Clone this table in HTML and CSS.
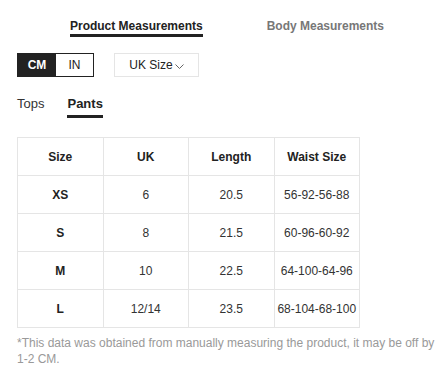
FILE: index.html
```html
<!DOCTYPE html>
<html lang="en">
<head>
    <meta charset="UTF-8">
    <meta name="viewport" content="width=device-width, initial-scale=1.0">
    <title>Size Guide</title>
    <link rel="stylesheet" href="styles.css">
</head>
<body>
    <div class="size-guide">
        <div class="main-tabs">
            <span class="main-tab active">Product Measurements</span>
            <span class="main-tab">Body Measurements</span>
        </div>

        <div class="controls">
            <div class="unit-toggle">
                <span class="unit active">CM</span>
                <span class="unit">IN</span>
            </div>
            <div class="size-select">
                <span>UK Size</span>
                <svg class="chevron" width="9" height="6" viewBox="0 0 9 6">
                    <polyline points="0.5,0.5 4.5,4.5 8.5,0.5" fill="none" stroke="#666" stroke-width="1"/>
                </svg>
            </div>
        </div>

        <div class="sub-tabs">
            <span class="sub-tab">Tops</span>
            <span class="sub-tab active">Pants</span>
        </div>

        <table class="size-table">
            <thead>
                <tr>
                    <th>Size</th>
                    <th>UK</th>
                    <th>Length</th>
                    <th>Waist Size</th>
                </tr>
            </thead>
            <tbody>
                <tr><td class="size-name">XS</td><td>6</td><td>20.5</td><td>56-92-56-88</td></tr>
                <tr><td class="size-name">S</td><td>8</td><td>21.5</td><td>60-96-60-92</td></tr>
                <tr><td class="size-name">M</td><td>10</td><td>22.5</td><td>64-100-64-96</td></tr>
                <tr><td class="size-name">L</td><td>12/14</td><td>23.5</td><td>68-104-68-100</td></tr>
            </tbody>
        </table>

        <p class="note">*This data was obtained from manually measuring the product, it may be off by 1-2 CM.</p>
    </div>
</body>
</html>
```

FILE: styles.css
```css
body {
    margin: 0;
    font-family: "Liberation Sans", Arial, sans-serif;
    color: #222;
    background-color: #fff;
}
.size-guide {
    padding: 19px 9px 0 17px;
}
/* top tabs */
.main-tabs {
    display: flex;
    justify-content: center;
    gap: 64px;
}
.main-tab {
    font-size: 12px;
    font-weight: bold;
    line-height: 14px;
    color: #777;
    padding-bottom: 1px;
    border-bottom: 3px solid transparent;
}
.main-tab.active {
    color: #222;
    border-bottom-color: #222;
}
/* unit + size system */
.controls {
    display: flex;
    gap: 20px;
    margin-top: 16px;
}
.unit-toggle {
    display: flex;
    border: 1px solid #222;
}
.unit {
    width: 37px;
    height: 22px;
    line-height: 22px;
    text-align: center;
    font-size: 12px;
    color: #222;
}
.unit.active {
    width: 38px;
    background-color: #222;
    color: #fff;
    font-weight: bold;
}
.size-select {
    display: flex;
    align-items: center;
    justify-content: center;
    gap: 2px;
    width: 83px;
    height: 22px;
    border: 1px solid #e5e5e5;
    font-size: 12px;
    color: #222;
}
.chevron {
    margin-top: 3px;
}
/* category tabs */
.sub-tabs {
    display: flex;
    gap: 23px;
    margin-top: 19px;
}
.sub-tab {
    font-size: 13px;
    line-height: 16px;
    color: #333;
    padding-bottom: 3px;
    border-bottom: 3px solid transparent;
}
.sub-tab.active {
    font-weight: bold;
    color: #222;
    border-bottom-color: #222;
}
/* table */
.size-table {
    margin-top: 19px;
    width: 343px;
    border-collapse: collapse;
    table-layout: fixed;
    font-size: 12px;
}
.size-table th,
.size-table td {
    height: 37px;
    padding: 0 2px;
    border: 1px solid #e5e5e5;
    text-align: center;
    color: #333;
}
.size-table th {
    font-weight: bold;
    color: #222;
}
.size-table .size-name {
    font-weight: bold;
    color: #222;
}
.note {
    margin: 7px 0 0;
    font-size: 12px;
    line-height: 16px;
    color: #999;
}
```
